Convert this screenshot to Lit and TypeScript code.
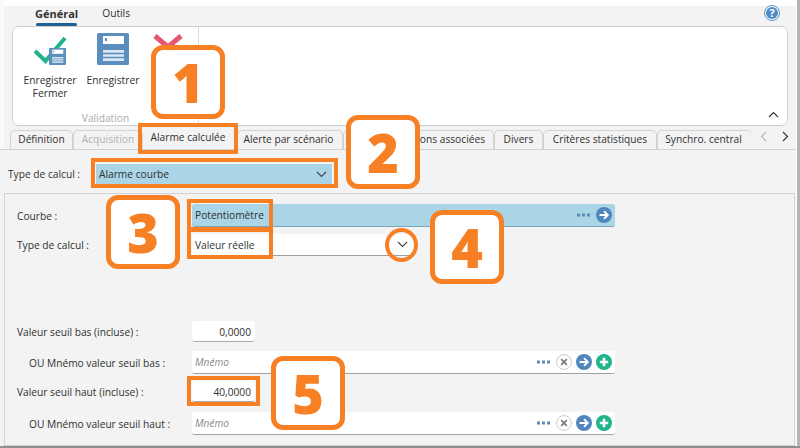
import { LitElement, html, css, svg } from "lit";
import { customElement } from "lit/decorators.js";

const chevron = (c = "#444") => html`<svg class="chev" width="11" height="7" viewBox="0 0 11 7"><path d="M1 1l4.5 4.5L10 1" fill="none" stroke="${c}" stroke-width="1.1"/></svg>`;
const dots = html`<svg width="13" height="4" viewBox="0 0 13 4"><g fill="#5b8cbc"><rect x="0" y="0.5" width="3" height="3"/><rect x="5" y="0.5" width="3" height="3"/><rect x="10" y="0.5" width="3" height="3"/></g></svg>`;
const arrow = html`<svg width="16" height="16" viewBox="0 0 16 16"><circle cx="8" cy="8" r="8" fill="#4f86bd"/><path d="M3.5 8h8M8 4.2L11.8 8 8 11.8" fill="none" stroke="#fff" stroke-width="1.9"/></svg>`;
const clear = html`<svg width="16" height="16" viewBox="0 0 16 16"><circle cx="8" cy="8" r="7.4" fill="#fff" stroke="#c4c4c4" stroke-width="0.9"/><path d="M5.2 5.2l5.6 5.6M10.8 5.2l-5.6 5.6" stroke="#7d7d7d" stroke-width="1.8"/></svg>`;
const plus = html`<svg width="16" height="16" viewBox="0 0 16 16"><circle cx="8" cy="8" r="8" fill="#20b48c"/><path d="M8 3.8v8.4M3.8 8h8.4" stroke="#fff" stroke-width="2.6"/></svg>`;
const help = html`<svg width="16" height="16" viewBox="0 0 16 16"><circle cx="8" cy="8" r="7.5" fill="#fff" stroke="#5b93c4"/><circle cx="8" cy="8" r="6" fill="#4f8cc2"/><text x="8" y="11.6" text-anchor="middle" class="q">?</text></svg>`;

const floppy = svg`<path d="M0 1.5A1.5 1.5 0 0 1 1.5 0H30.5A1.5 1.5 0 0 1 32 1.5V30.500A1.5 1.5 0 0 1 30.500 32H1.5A1.5 1.5 0 0 1 0 30.5z" fill="#5b8dbd"/><rect x="6" y="3" width="21" height="8" fill="#fff"/><rect x="8" y="5" width="2" height="3" fill="#5b8dbd"/><rect x="6" y="17" width="21" height="11" fill="#dbe7f2"/><path d="M6 20.500h21M6 24.500h21" stroke="#5b8dbd" stroke-width="1.500"/>`;

@customElement("app-root")
export class AppRoot extends LitElement {
  static styles = css`
    :host { display: block; width: 800px; height: 448px; position: relative; overflow: hidden; background: #f3f3f3;
      font-family: "Open Sans", "Noto Sans", sans-serif; font-size: 10.2px; color: #303030; }
    .page { display: flex; flex-direction: column; height: 448px; box-sizing: border-box; padding-top: 6px; position: relative; }
    .page::before { content: ""; position: absolute; left: 0; right: 0; top: 0; height: 6px; background: #fff; }
    .frame-r { position: absolute; top: 0; bottom: 0; right: 0; width: 4px; background: #fff; border-right: 3px solid #b4b4b4; box-sizing: border-box; }
    .frame-b { position: absolute; left: 0; right: 0; bottom: 0; height: 2px; background: #8f8f8f; }
    .frame-l { position: absolute; left: 0; top: 0; height: 149px; width: 4px; background: #fafafa; }
    .menu { display: flex; height: 20px; padding: 0 0 6px 35px; box-sizing: border-box; gap: 24px; align-items: center; position: relative; }
    .menu b { font-weight: 700; font-size: 11px; position: relative; color: #333; }
    .menu b::after { content: ""; position: absolute; left: 1px; right: 1px; top: 17px; height: 3px; background: #1f5f96; border-radius: 2px; }
    .menu span { font-size: 10.2px; }
    .help { position: absolute; right: 20px; top: -1px; height: 16px; }
    .q { font: 700 11px "Open Sans", sans-serif; fill: #fff; }
    .ribbon { margin-left: 12px; width: 776px; height: 100px; box-sizing: border-box; background: #fff; border: 1px solid #cfcfcf; border-radius: 7px; display: flex; position: relative; }
    .group { width: 186px; box-sizing: border-box; border-right: 1px solid #dcdcdc; display: flex; flex-direction: column; align-items: center; }
    .btns { display: flex; gap: 5px; width: 100%; padding: 6px 0 0 8px; box-sizing: border-box; height: 85px; }
    .btn { width: 58px; display: flex; flex-direction: column; align-items: center; text-align: center; line-height: 13px; font-size: 10.3px; }
    .btn.x { width: 32px; margin-left: 5px; }
    .btn svg { height: 32px; margin-bottom: 9px; display: block; }
    .gl { color: #ababab; font-size: 10.2px; margin-top: -1px; }
    .collapse { position: absolute; right: 8px; bottom: 7px; }
    .tabs { display: flex; height: 24px; box-sizing: border-box; padding: 4px 0 0 10px; border-bottom: 1px solid #d2d2d2; align-items: stretch; position: relative; }
    .tab { border: 1px solid #d4d4d4; border-bottom: 0; border-radius: 5px 5px 0 0; padding: 0 0 2px; display: flex; align-items: center; justify-content: center; box-sizing: border-box; }
    .tab.off { color: #b0b0b0; }
    .tab.on { background: #f3f3f3; height: 21px; margin: -2px 0 -1px; padding: 0 4px 3px 0; border: 0; }
    .tab.tight { padding-right: 3px; }
    .tab.end { justify-content: flex-end; padding-right: 8px; }
    .tab.open { border-right: 0; padding-right: 3px; }
    .tabnav { position: absolute; right: 11px; top: 5px; display: flex; gap: 15px; }
    .top { display: flex; align-items: center; height: 20px; margin-top: 14px; padding-left: 8px; }
    .top label { width: 88px; }
    .combo { background: #a9d5e6; height: 20px; display: flex; align-items: center; justify-content: space-between; padding: 0 5px 0 3px; box-sizing: border-box; width: 236px; }
    .box { margin: 9px 5px 2px 4px; flex: 1; border: 1px solid #d4d4d4; border-bottom: 1px solid #cfcfcf; padding: 10px 0 0 12px; display: flex; flex-direction: column; }
    .row { display: flex; align-items: center; }
    .row > label { width: 175px; flex: none; }
    .row > label.in { padding-left: 12px; width: 163px; }
    .field { height: 23px; box-sizing: border-box; border-radius: 3px; width: 423px; display: flex; align-items: center; padding: 0 3px; }
    .blue { background: #a9d5e6; border-bottom: 1px solid #7fa6b8; }
    .white { background: #fff; border-bottom: 1px solid #9f9f9f; }
    .field .g { flex: 1; }
    .field .ic { display: flex; align-items: center; gap: 4px; }
    .field .ic svg:first-child { margin-right: 2px; }
    .mn { font-style: italic; color: #8a8a8a; }
    .sel { width: 222px; height: 22px; justify-content: space-between; padding: 0 6px 0 3px; border-radius: 0; }
    .num { width: 63px; height: 21px; background: #fff; border-radius: 3px; border-bottom: 1px solid #aaa; box-sizing: border-box; text-align: right; padding: 4px 4px 0 0; }
    .gap-a { margin-top: 7px; }
    .gap-b { margin-top: 65px; }
    .sp9 { height: 9px; }
    .sp7 { height: 7px; }
    .sp10 { height: 10px; }
    .mk { position: absolute; box-sizing: border-box; border: 4px solid #f77f24; }
    .big { background: #fff; border-radius: 12px; width: 74px; height: 74px; display: flex; align-items: center; justify-content: center; color: #f77f24; font-weight: 800; font-size: 54px; line-height: 1; border-width: 5px; }
    .circ { border-radius: 50%; }
    .m1 { left: 151px; top: 45px; }
    .m2 { left: 346px; top: 115px; }
    .m3 { left: 106px; top: 195px; }
    .m4 { left: 430px; top: 210px; }
    .m5 { left: 271px; top: 356px; }
    .r1 { left: 138px; top: 123px; width: 100px; height: 31px; }
    .r2 { left: 91px; top: 158px; width: 247px; height: 30px; }
    .r3 { left: 187px; top: 199px; width: 86px; height: 32px; }
    .r4 { left: 187px; top: 228px; width: 86px; height: 31px; }
    .r5 { left: 385px; top: 228px; width: 33px; height: 34px; }
    .r6 { left: 187px; top: 376px; width: 73px; height: 30px; }
  `;

  private mnemo(label: string) {
    return html`<div class="row"><label class="in">${label}</label>
      <div class="field white"><span class="mn">Mnémo</span><span class="g"></span>
      <span class="ic">${dots}${clear}${arrow}${plus}</span></div></div>`;
  }

  render() {
    const tabs: [string, number, string][] = [
      ["Définition", 63, ""], ["Acquisition", 70, "off"], ["Alarme calculée", 94, "on"],
      ["Alerte par scénario", 106, "tight"], ["Actions associées", 151, "end"], ["Divers", 49, ""],
      ["Critères statistiques", 114, ""], ["Synchro. central", 95, "open"],
    ];
    return html`<div class="page">
      <div class="menu"><b>Général</b><span>Outils</span><span class="help">${help}</span></div>
      <div class="ribbon">
        <div class="group">
          <div class="btns">
            <div class="btn"><svg width="34" height="32" viewBox="0 0 34 32"><path d="M2 18l10.500 10L32 5" fill="none" stroke="#20b48c" stroke-width="4"/><g transform="translate(16 15) scale(.53)">${floppy}</g></svg>Enregistrer Fermer</div>
            <div class="btn"><svg width="32" height="32" viewBox="0 0 32 32">${floppy}</svg>Enregistrer</div>
            <div class="btn x"><svg width="32" height="32" viewBox="0 0 32 32"><path d="M3 3l13 11L29 3" fill="none" stroke="#e8566f" stroke-width="5"/></svg></div>
          </div>
          <div class="gl">Validation</div>
        </div>
        <svg class="collapse" width="11" height="7" viewBox="0 0 11 7"><path d="M1 6l4.500-4.500L10 6" fill="none" stroke="#333" stroke-width="1.100"/></svg>
      </div>
      <div class="tabs">
        ${tabs.map(([t, w, c]) => html`<div class="tab ${c}" style="width:${w}px">${t}</div>`)}
        <div class="tabnav">
          <svg width="7" height="11" viewBox="0 0 7 11"><path d="M6 1L1.500 5.500 6 10" fill="none" stroke="#b5b5b5" stroke-width="1.100"/></svg>
          <svg width="7" height="11" viewBox="0 0 7 11"><path d="M1 1l4.500 4.500L1 10" fill="none" stroke="#333" stroke-width="1.100"/></svg>
        </div>
      </div>
      <div class="top"><label>Type de calcul :</label><div class="combo">Alarme courbe ${chevron()}</div></div>
      <div class="box">
        <div class="row"><label>Courbe :</label>
          <div class="field blue"><span>Potentiomètre</span><span class="g"></span><span class="ic">${dots}${arrow}</span></div></div>
        <div class="row gap-a"><label>Type de calcul :</label>
          <div class="field white sel"><span>Valeur réelle</span>${chevron()}</div></div>
        <div class="row gap-b"><label>Valeur seuil bas (incluse) :</label><div class="num">0,0000</div></div>
        <div class="sp9"></div>
        ${this.mnemo("OU Mnémo valeur seuil bas :")}
        <div class="sp7"></div>
        <div class="row"><label>Valeur seuil haut (incluse) :</label><div class="num">40,0000</div></div>
        <div class="sp10"></div>
        ${this.mnemo("OU Mnémo valeur seuil haut :")}
      </div>
      </div>
      <div class="frame-l"></div>
      <div class="frame-r"></div>
      <div class="frame-b"></div>
      <div class="mk big m1">1</div>
      <div class="mk big m2">2</div>
      <div class="mk big m3">3</div>
      <div class="mk big m4">4</div>
      <div class="mk big m5">5</div>
      <div class="mk r1"></div>
      <div class="mk r2"></div>
      <div class="mk r3"></div>
      <div class="mk r4"></div>
      <div class="mk circ r5"></div>
      <div class="mk r6"></div>
    `;
  }
}
